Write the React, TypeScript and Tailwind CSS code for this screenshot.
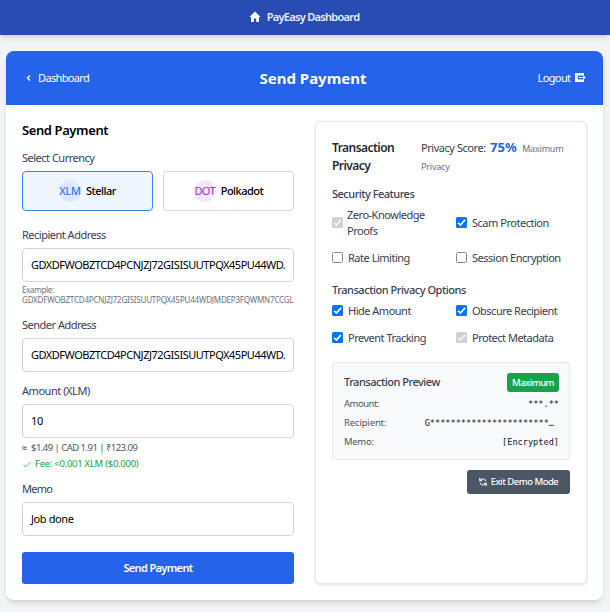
import React from "react";

const ADDRESS = "GDXDFWOBZTCD4PCNJZJ72GISISUUTPQX45PU44WD.";

function Label({ children, className = "" }: { children: React.ReactNode; className?: string }) {
  return <label className={`block h-[26px] text-[11px] leading-[26px] text-[#374151] whitespace-nowrap ${className}`}>{children}</label>;
}

function Field({ value, className = "" }: { value: string; className?: string }) {
  return (
    <div className={`h-[34px] rounded-[4px] border border-[#d1d5db] bg-white px-2 text-[11px] leading-[32px] text-black whitespace-nowrap ${className}`}>
      {value}
    </div>
  );
}

function Check({ label, checked = false, disabled = false, className = "" }: { label: React.ReactNode; checked?: boolean; disabled?: boolean; className?: string }) {
  const box = disabled ? "bg-[#d1d1d1]" : checked ? "bg-[#0075ff]" : "border border-[#8a8a8a] bg-white";
  return (
    <div className={`flex items-center text-[11px] leading-4 text-[#374151] whitespace-nowrap ${className}`}>
      <span className={`flex h-[11px] w-[11px] shrink-0 items-center justify-center rounded-[1.5px] ${box}`}>
        {checked && (
          <svg viewBox="0 0 10 10" className="h-[11px] w-[11px]" fill="none" stroke={disabled ? "#f4f4f4" : "#fff"} strokeWidth="1.5">
            <path d="M1.9 5.2 4 7.3 8.2 2.6" />
          </svg>
        )}
      </span>
      {label}
    </div>
  );
}

function Row({ name, value, nameClass = "", className = "" }: { name: string; value: string; nameClass?: string; className?: string }) {
  return (
    <div className="flex h-[19px] items-center justify-between whitespace-nowrap">
      <span className={`text-[9.5px] text-[#4b5563] ${nameClass}`}>{name}</span>
      <span className={`font-['DejaVu_Sans_Mono',monospace] text-[8.6px] text-[#111827] ${className}`}>{value}</span>
    </div>
  );
}

export default function App() {
  return (
    <div className="h-[612px] w-[610px] overflow-hidden bg-[#f3f4f6] font-['Noto_Sans',sans-serif]">
      <nav className="flex h-[35px] items-center justify-center bg-[#294bb4] pr-[2px] text-white shadow-md">
        <svg viewBox="0 0 12 12" className="mr-[6px] mb-[2px] h-[12px] w-[12px]" fill="currentColor">
          <path d="M6 .5 11.6 6H10v4.4a.6.6 0 0 1-.6.6H7.2V7.6H4.8V11H2.6a.6.6 0 0 1-.6-.6V6H.4Z" />
        </svg>
        <span className="text-[11px] font-semibold tracking-[-0.7px] text-[#e8edf9]">PayEasy Dashboard</span>
      </nav>

      <main className="mt-4 mr-[7px] ml-[6px] h-[549px] rounded-lg bg-white shadow-md">
        <header className="flex h-[54px] items-center justify-between rounded-t-lg bg-[#2563eb] pr-[17px] pl-[20px] text-white">
          <div className="flex w-[134px] items-center text-[11px] tracking-[-0.65px]">
            <svg viewBox="0 0 6 8" className="mr-[7px] h-[8px] w-[5px]" fill="none" stroke="currentColor" strokeWidth="1.4">
              <path d="M4.8 1 1.6 4l3.2 3" />
            </svg>
            Dashboard
          </div>
          <h1 className="text-[15px] font-bold">Send Payment</h1>
          <div className="flex w-[120px] items-center justify-end text-[11px] tracking-[-0.6px]">
            Logout
            <svg viewBox="0 0 11 9" className="mb-[1px] ml-[4.5px] h-[9px] w-[11px]">
              <path fill="#fff" d="M0 0H9V2.4H3V6.6H9V9H0Z" />
              <path fill="#fff" d="M4 4h4.2V2.2L10.8 4.5 8.2 6.8V5H4Z" />
            </svg>
          </div>
        </header>

        <div className="grid grid-cols-[272px_272px] gap-x-[21px] px-4 pt-4">
          <section>
            <h2 className="h-[24px] text-[13px] leading-[19px] font-semibold tracking-[-0.4px] text-black">Send Payment</h2>
            <Label className="tracking-[-0.5px]">Select Currency</Label>
            <div className="flex h-[40px] gap-[10px]">
              <div className="flex w-[131px] items-center justify-center rounded-[4px] border border-[#3b82f6] bg-[#eff6ff] text-[11px]">
                <span className="mr-[5px] flex h-[22px] w-[22px] items-center justify-center rounded-full bg-[#dbeafe] tracking-[-0.3px] text-[#2563eb]">XLM</span>
                <span className="font-medium tracking-[-0.5px]">Stellar</span>
              </div>
              <div className="flex w-[131px] items-center justify-center rounded-[4px] border border-[#d1d5db] text-[11px]">
                <span className="mr-[5px] flex h-[22px] w-[22px] items-center justify-center rounded-full bg-[#f3e8ff] tracking-[-0.6px] text-[#9333ea]">DOT</span>
                <span className="font-medium tracking-[-0.5px]">Polkadot</span>
              </div>
            </div>
            <Label className="mt-[11px] tracking-[-0.5px]">Recipient Address</Label>
            <Field value={ADDRESS} className="tracking-[-0.48px]" />
            <p className="mt-[3px] h-[27px] text-[8px] leading-[10px] tracking-[-0.19px] whitespace-nowrap text-[#6b7280]">
              <span className="tracking-[-0.3px]">Example:</span>
              <br />
              GDXDFWOBZTCD4PCNJZJ72GISISUUTPQX45PU44WDJMDEP3FQWMN7CCGL
            </p>
            <Label className="tracking-[-0.5px]">Sender Address</Label>
            <Field value={ADDRESS} className="tracking-[-0.48px]" />
            <Label className="mt-[6px] tracking-[-0.45px]">Amount (XLM)</Label>
            <Field value="10" className="tracking-[-0.3px]" />
            <p className="mt-[2px] h-4 text-[9.5px] leading-4 tracking-[-0.53px] whitespace-nowrap text-[#4b5563]"><span className="mr-[3px] inline-block w-[6px] text-[9px] font-bold">≈</span>$1.49 | CAD 1.91 | ₹123.09</p>
            <p className="flex h-4 items-center text-[9.5px] leading-4 tracking-[-0.27px] whitespace-nowrap text-[#16a34a]">
              <svg viewBox="0 0 8 7" className="mr-[4px] ml-[1px] h-[7px] w-[8px]" fill="none" stroke="currentColor" strokeWidth=".8">
                <path d="M.5 3.8 2.6 6 7.5 1" />
              </svg>
              Fee: &lt;0.001 XLM ($0.000)
            </p>
            <Label className="mt-1 tracking-[-0.7px]">Memo</Label>
            <Field value="Job done" className="tracking-[-0.4px]" />
            <button className="mt-4 block h-[32px] w-full rounded-[3px] bg-[#2563eb] text-[11px] font-semibold tracking-[-0.65px] text-white">Send Payment</button>
          </section>

          <section className="h-[463px] rounded-[5px] border border-[#e5e7eb] bg-white px-4 pt-4 shadow-sm">
            <div className="flex h-[50px]">
              <h3 className="mt-[1px] w-[89px] text-[12px] leading-[18px] font-semibold tracking-[-0.55px] text-[#1f2937]">
                Transaction
                <br />
                Privacy
              </h3>
              <div className="text-[11px] leading-[18px] tracking-[-0.45px] whitespace-nowrap text-[#374151]">
                Privacy Score: <span className="mx-[2px] text-[13px] font-bold tracking-normal text-[#2563eb]">75%</span> <span className="ml-[1px] text-[9px] tracking-[-0.2px] text-[#6b7280]">Maximum</span>
                <div className="text-[9px] tracking-[-0.2px] text-[#6b7280]">Privacy</div>
              </div>
            </div>
            <h4 className="h-[18px] text-[11px] leading-[12px] font-medium tracking-[-0.5px] text-[#374151]">Security Features</h4>
            <div className="grid grid-cols-[124px_1fr] tracking-[-0.48px]">
              <Check disabled checked className="h-[33px] gap-[4px]" label={<span>Zero-Knowledge<br />Proofs</span>} />
              <Check checked className="h-[33px] gap-[5px]" label="Scam Protection" />
              <Check className="h-[37px] gap-[5px]" label="Rate Limiting" />
              <Check className="h-[37px] gap-[5px]" label="Session Encryption" />
            </div>
            <h4 className="mt-[5px] h-[16px] text-[11px] leading-[18px] font-medium tracking-[-0.45px] text-[#374151]">Transaction Privacy Options</h4>
            <div className="grid grid-cols-[124px_1fr] tracking-[-0.5px]">
              <Check checked className="h-[27px] gap-[5px]" label="Hide Amount" />
              <Check checked className="h-[27px] gap-[5px]" label="Obscure Recipient" />
              <Check checked className="h-[27px] gap-[5px]" label="Prevent Tracking" />
              <Check disabled checked className="h-[27px] gap-[5px]" label="Protect Metadata" />
            </div>
            <div className="mt-[11px] h-[98px] rounded-[3px] border border-[#e5e7eb] bg-[#f9fafb] pt-[10px] pr-[10px] pl-[11px]">
              <div className="mb-[3px] flex h-[19px] items-center justify-between">
                <span className="text-[11px] font-medium tracking-[-0.48px] text-[#374151]">Transaction Preview</span>
                <span className="h-[19px] w-[52px] rounded-[3px] bg-[#16a34a] text-center text-[9.5px] leading-[19px] font-medium tracking-[-0.55px] text-white">Maximum</span>
              </div>
              <Row name="Amount:" value="***.**" nameClass="tracking-[-0.5px]" />
              <Row name="Recipient:" value="G***********************… " nameClass="tracking-[-0.15px]" className="pr-[5px]" />
              <Row name="Memo:" value="[Encrypted]" nameClass="tracking-[-0.3px]" />
            </div>
            <button className="mt-[10px] ml-auto flex h-[24px] w-[103px] items-center justify-center rounded-[3px] bg-[#4b5563] text-[9.5px] font-medium tracking-[-0.5px] whitespace-nowrap text-white">
              <svg viewBox="0 0 8 8" className="mr-[4px] h-[8px] w-[8px]" fill="none" stroke="#e5e7eb" strokeWidth="1.1">
                <path d="M.6 0v2.6h2.6M.8 2.4C2.4.4 6.2.2 6.9 3.3M7.4 8V5.4H4.8M7.2 5.6C5.6 7.6 1.8 7.8 1.1 4.7" />
              </svg>
              Exit Demo Mode
            </button>
          </section>
        </div>
      </main>
    </div>
  );
}
